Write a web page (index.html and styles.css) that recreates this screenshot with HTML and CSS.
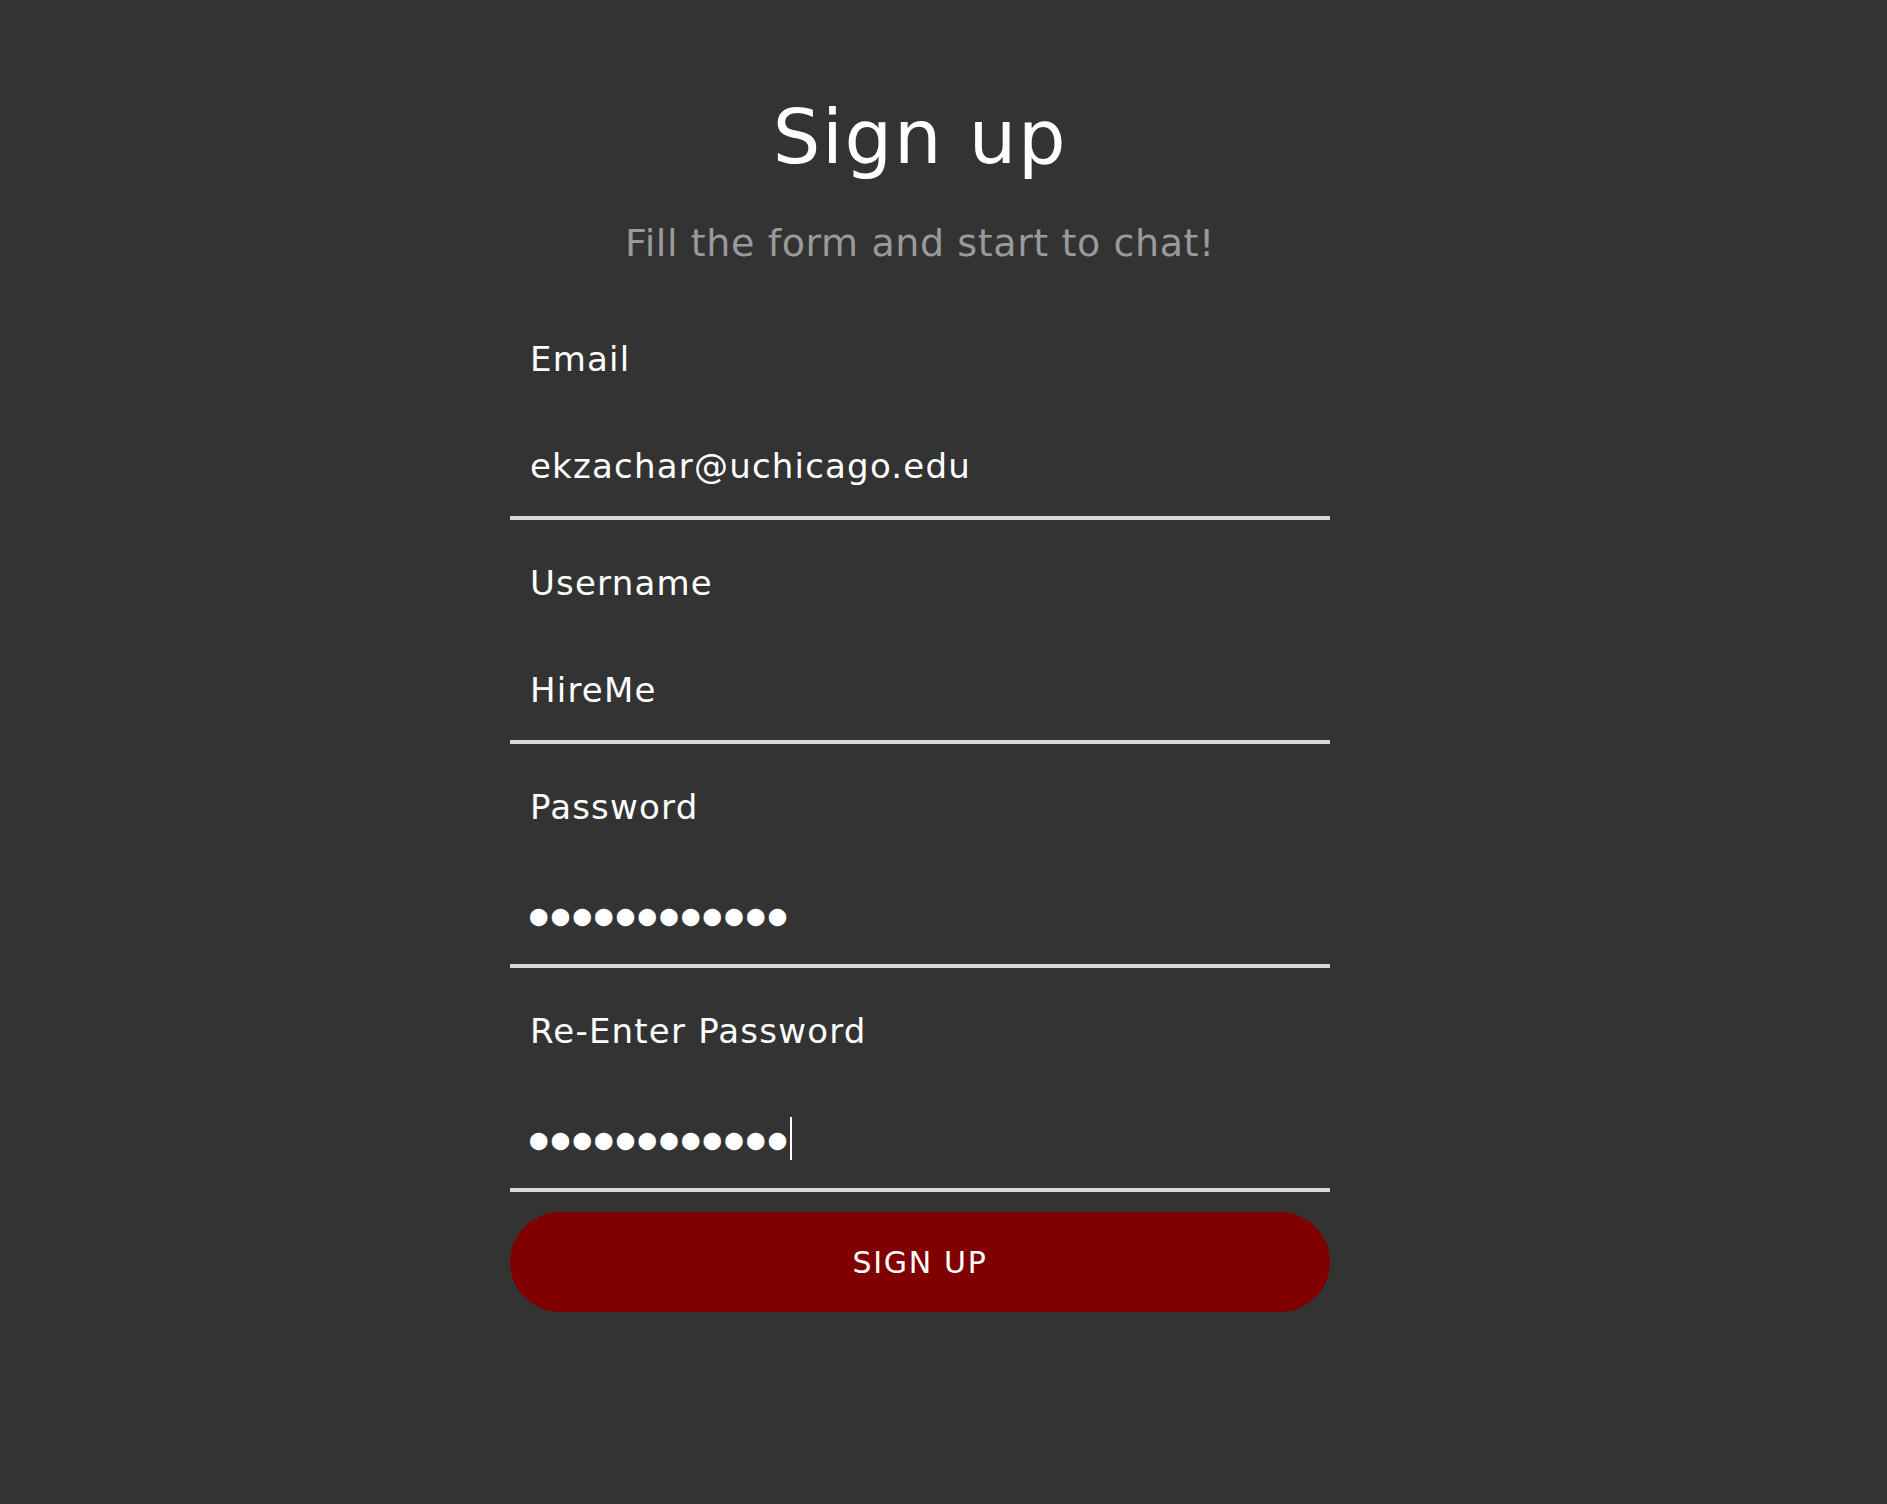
FILE: index.html
```html
<!DOCTYPE html>
<html lang="en">
<head>
<meta charset="utf-8">
<title>Sign up</title>
<link rel="stylesheet" href="styles.css">
</head>
<body>
<main class="page">
  <form class="signup">
    <h1 class="title">Sign up</h1>
    <p class="subtitle">Fill the form and start to chat!</p>
    <div class="field">
      <label class="label">Email</label>
      <div class="value">ekzachar@uchicago.edu</div>
    </div>
    <div class="field">
      <label class="label">Username</label>
      <div class="value">HireMe</div>
    </div>
    <div class="field">
      <label class="label">Password</label>
      <div class="value"><span class="dots">●●●●●●●●●●●●</span></div>
    </div>
    <div class="field">
      <label class="label">Re-Enter Password</label>
      <div class="value"><span class="dots">●●●●●●●●●●●●</span><span class="caret"></span></div>
    </div>
    <button type="button" class="btn">SIGN UP</button>
  </form>
</main>
</body>
</html>
```

FILE: styles.css
```css
html, body {
  margin: 0;
  padding: 0;
  background: #333333;
}
body {
  font-family: "DejaVu Sans", "Liberation Sans", sans-serif;
  color: #ffffff;
}
.page {
  display: flex;
  justify-content: center;
  padding: 92px 47px 0 0;
  min-height: 1504px;
  box-sizing: border-box;
}
.signup {
  width: 820px;
  display: flex;
  flex-direction: column;
}
.title {
  margin: 0;
  font-size: 75px;
  line-height: 90px;
  font-weight: normal;
  text-align: center;
  letter-spacing: 1.7px;
}
.subtitle {
  margin: 38px 0 30px;
  font-size: 38px;
  line-height: 46px;
  text-align: center;
  color: #9a9a9a;
  letter-spacing: 0.6px;
}
.field {
  display: flex;
  flex-direction: column;
  margin-top: 43px;
  border-bottom: 4px solid #d9d9d9;
  padding-bottom: 30px;
}
.label {
  font-size: 34px;
  line-height: 40px;
  padding-left: 20px;
  letter-spacing: 1.2px;
}
.value {
  margin-top: 67px;
  font-size: 34px;
  line-height: 40px;
  height: 40px;
  padding-left: 20px;
  letter-spacing: 1.2px;
  display: flex;
  align-items: center;
}
.dots {
  font-family: "DejaVu Sans Mono", monospace;
  font-size: 29px;
  letter-spacing: 4.24px;
  line-height: 40px;
  padding-top: 2px;
}
.caret {
  display: inline-block;
  width: 2px;
  height: 43px;
  background: #ffffff;
  margin-left: 0;
}
.btn {
  margin-top: 20px;
  height: 100px;
  border: none;
  border-radius: 50px;
  background: #800000;
  color: #ffffff;
  font-family: "DejaVu Sans", "Liberation Sans", sans-serif;
  font-size: 30px;
  letter-spacing: 1.7px;
  cursor: pointer;
}
```
